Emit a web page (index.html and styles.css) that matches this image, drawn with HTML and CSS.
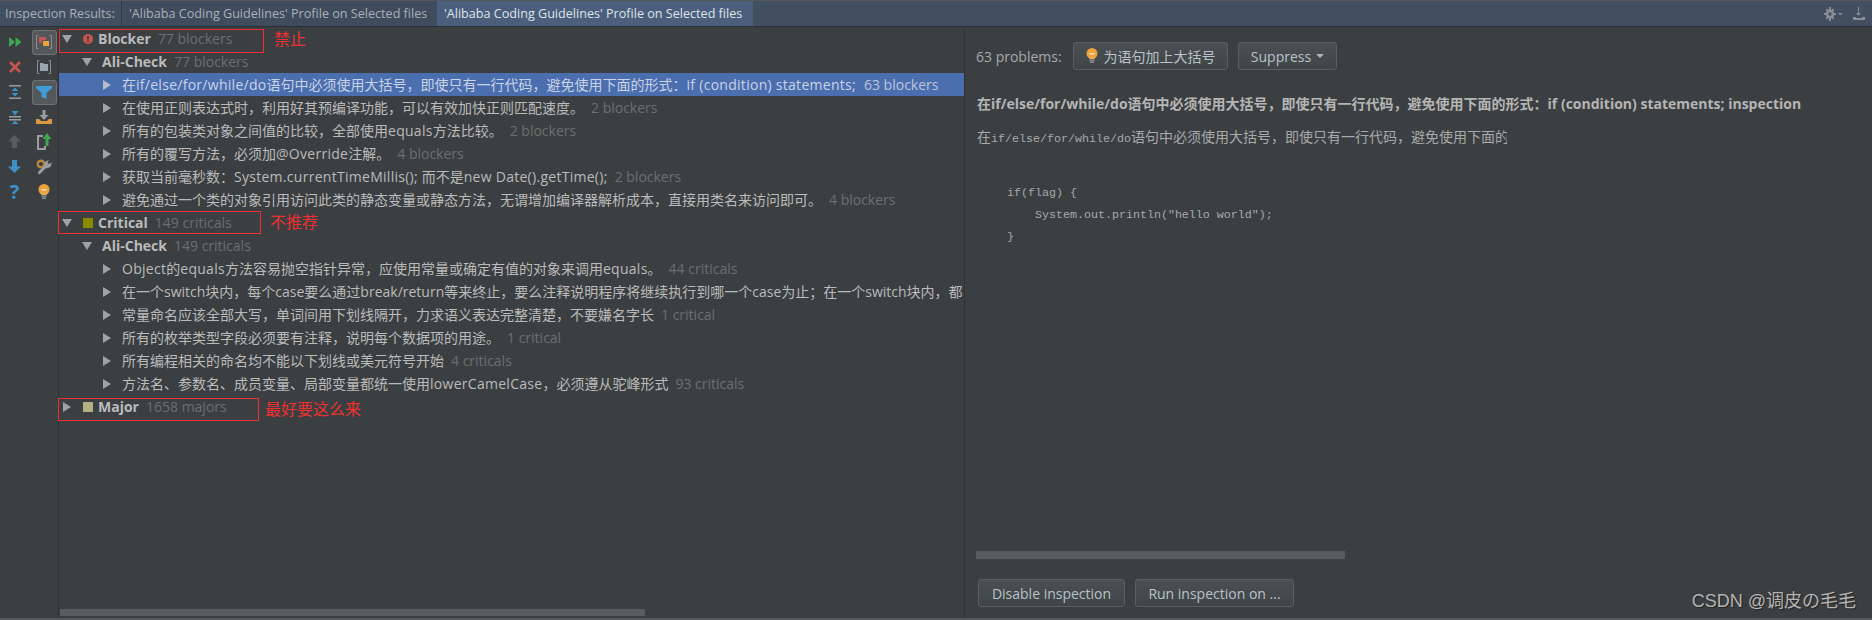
FILE: index.html
```html
<!DOCTYPE html>
<html lang="zh">
<head>
<meta charset="utf-8">
<title>Inspection Results</title>
<link rel="stylesheet" href="styles.css">
</head>
<body>
<div class="app">
  <header class="tabs">
    <div class="tab-label">Inspection Results:</div>
    <div class="tab">'Alibaba Coding Guidelines' Profile on Selected files</div>
    <div class="tab tab-active">'Alibaba Coding Guidelines' Profile on Selected files</div>
    <div class="tab-tools">
      <svg class="gear" width="19" height="14" viewBox="0 0 19 14"><g fill="#8a8e92"><circle cx="6" cy="7" r="4.300"/><path d="M5 0h2v3H5zM5 11h2v3H5zM0 6h3v2H0zM9 6h3v2H9zM1.600 3l1.400-1.400 2 2-1.400 1.400zM10.400 11l-1.400 1.400-2-2 1.400-1.400zM9 1.600L10.400 3l-2 2L7 3.600zM3 12.400L1.600 11l2-2L5 10.400z"/><path d="M14 6h4.500l-2.250 2.300z"/></g><circle cx="6" cy="7" r="1.700" fill="#43505f"/></svg>
      <svg width="12" height="14" viewBox="0 0 12 14"><g fill="#8a8e92"><path d="M5 0h1v6h2L5.500 8.500 3 6h2z"/><path d="M0 10h3v1h6v-1h3v3H0z"/></g></svg>
    </div>
  </header>
  <main class="main">
    <aside class="toolbar">
      <div class="tool"><svg width="14" height="14" viewBox="0 0 14 14"><path fill="#3fa552" d="M1 2l6 5-6 5zM7.500 2l6 5-6 5z"/></svg></div>
      <div class="tool tool-on"><svg width="18" height="18" viewBox="0 0 18 18"><g fill="none" stroke="#8c8f91"><path d="M3.500 2.500h-2v13h2M14.500 2.500h2v13h-2"/></g><path fill="#c75450" d="M4 4h7v6H4z"/><path fill="#eba33c" stroke="#55585a" d="M7.500 7.500h7v6h-7z"/></svg></div>
      <div class="tool"><svg width="14" height="14" viewBox="0 0 14 14"><path d="M2 2l10 10M12 2L2 12" stroke="#c75450" stroke-width="2.600" fill="none"/></svg></div>
      <div class="tool"><svg width="16" height="18" viewBox="0 0 16 18"><g fill="none" stroke="#8c8f91"><path d="M3.500 2.500h-2v13h2M12.500 2.500h2v13h-2"/></g><path fill="#9aa7b0" d="M4 5h3l1 1h4v7H4z"/></svg></div>
      <div class="tool"><svg width="14" height="16" viewBox="0 0 14 16"><path fill="#9a9da0" d="M1 1h12v1.500H1zM1 13.500h12V15H1z"/><path fill="#3d8fc4" d="M7 3.500l3.500 3.500h-7zM7 12.500L3.500 9h7z"/></svg></div>
      <div class="tool tool-on"><svg width="16" height="16" viewBox="0 0 16 16"><path fill="#3d9bd6" d="M0 2h16v2l-5.500 5v6l-5-2V9L0 4z"/></svg></div>
      <div class="tool"><svg width="14" height="16" viewBox="0 0 14 16"><path fill="#9a9da0" d="M1 7h12v1.500H1zM1 10h12v1.500H1z"/><path fill="#3d8fc4" d="M7 6.500L3.500 2h7zM7 11.500l3.500 3.500h-7z"/></svg></div>
      <div class="tool"><svg width="16" height="16" viewBox="0 0 16 16"><path fill="#d99a3e" d="M0 10h3l2 2h6l2-2h3v5H0z"/><path fill="#9a9da0" d="M6.500 1h3v5h3L8 11 3.500 6h3z"/></svg></div>
      <div class="tool"><svg width="13" height="13" viewBox="0 0 13 13"><path fill="#5a5d5f" d="M6.500 0L13 6.500H9V13H4V6.500H0z"/></svg></div>
      <div class="tool"><svg width="16" height="18" viewBox="0 0 16 18"><path fill="none" stroke="#9a9da0" stroke-width="2" d="M7 3H2v13h7v-3"/><path fill="#3fa552" d="M11 0l4.500 6h-3v7h-3V6h-3z"/></svg></div>
      <div class="tool"><svg width="13" height="13" viewBox="0 0 13 13"><path fill="#3d8fc4" d="M6.500 13L0 6.500h4V0h5v6.500h4z"/></svg></div>
      <div class="tool"><svg width="16" height="16" viewBox="0 0 16 16"><circle cx="5" cy="5" r="3.300" fill="none" stroke="#b7853d" stroke-width="2.400"/><path d="M2.500 14.500l6.500-6.500" stroke="#9a9da0" stroke-width="2.800" fill="none"/><path fill="#9a9da0" d="M8 7.500L9 3l4-2.500-1.500 3 1.500 1.500 3-1.500L14.500 8 10 9.500z"/></svg></div>
      <div class="tool tool-help">?</div>
      <div class="tool"><svg width="12" height="16" viewBox="0 0 12 16"><circle cx="6" cy="5.500" r="5.500" fill="#eba33c"/><path d="M3.500 5l1.200 1.500L6 5l1.300 1.500L8.500 5" fill="none" stroke="#fff" stroke-width=".8"/><path fill="#e0b060" d="M3.500 9h5v2h-5z"/><path fill="#8c8f91" d="M3.500 11.500h5V13h-5zM4 13.500h4V15H4z"/></svg></div>
    </aside>

    <section class="tree-pane">
      <div class="tree">
        <div class="row lv0"><i class="tri down"></i><svg class="sev" width="10" height="10" viewBox="0 0 10 10"><circle cx="5" cy="5" r="5" fill="#c75450"/><path fill="#3c3f41" d="M4.200 2h1.600v3.800H4.200zM4.200 6.500h1.600V8H4.200z"/></svg><b class="name">Blocker</b><span class="count">77 blockers</span></div>
        <div class="row lv1"><i class="tri down"></i><b class="name">Ali-Check</b><span class="count">77 blockers</span></div>
        <div class="row lv2 selected"><i class="tri right"></i><span class="text">在<span class="lat">if/else/for/while/do</span>语句中必须使用大括号，即使只有一行代码，避免使用下面的形式：<span class="lat">if (condition) statements;</span></span><span class="count">63 blockers</span></div>
        <div class="row lv2"><i class="tri right"></i><span class="text">在使用正则表达式时，利用好其预编译功能，可以有效加快正则匹配速度。</span><span class="count">2 blockers</span></div>
        <div class="row lv2"><i class="tri right"></i><span class="text">所有的包装类对象之间值的比较，全部使用<span class="lat">equals</span>方法比较。</span><span class="count">2 blockers</span></div>
        <div class="row lv2"><i class="tri right"></i><span class="text">所有的覆写方法，必须加<span class="lat">@Override</span>注解。</span><span class="count">4 blockers</span></div>
        <div class="row lv2"><i class="tri right"></i><span class="text">获取当前毫秒数：<span class="lat">System.currentTimeMillis();</span> 而不是<span class="lat">new Date().getTime();</span></span><span class="count">2 blockers</span></div>
        <div class="row lv2"><i class="tri right"></i><span class="text">避免通过一个类的对象引用访问此类的静态变量或静态方法，无谓增加编译器解析成本，直接用类名来访问即可。</span><span class="count">4 blockers</span></div>
        <div class="row lv0"><i class="tri down"></i><i class="sev sev-critical"></i><b class="name">Critical</b><span class="count">149 criticals</span></div>
        <div class="row lv1"><i class="tri down"></i><b class="name">Ali-Check</b><span class="count">149 criticals</span></div>
        <div class="row lv2"><i class="tri right"></i><span class="text"><span class="lat">Object</span>的<span class="lat">equals</span>方法容易抛空指针异常，应使用常量或确定有值的对象来调用<span class="lat">equals</span>。</span><span class="count">44 criticals</span></div>
        <div class="row lv2"><i class="tri right"></i><span class="text">在一个switch块内，每个case要么通过break/return等来终止，要么注释说明程序将继续执行到哪一个case为止；在一个switch块内，都</span></div>
        <div class="row lv2"><i class="tri right"></i><span class="text">常量命名应该全部大写，单词间用下划线隔开，力求语义表达完整清楚，不要嫌名字长</span><span class="count">1 critical</span></div>
        <div class="row lv2"><i class="tri right"></i><span class="text">所有的枚举类型字段必须要有注释，说明每个数据项的用途。</span><span class="count">1 critical</span></div>
        <div class="row lv2"><i class="tri right"></i><span class="text">所有编程相关的命名均不能以下划线或美元符号开始</span><span class="count">4 criticals</span></div>
        <div class="row lv2"><i class="tri right"></i><span class="text">方法名、参数名、成员变量、局部变量都统一使用<span class="lat">lowerCamelCase</span>，必须遵从驼峰形式</span><span class="count">93 criticals</span></div>
        <div class="row lv0"><i class="tri right"></i><i class="sev sev-major"></i><b class="name">Major</b><span class="count">1658 majors</span></div>
      </div>
      <div class="tree-scroll"><div class="tree-thumb"></div></div>
    </section>

    <section class="detail">
      <div class="actions">
        <span class="problems">63 problems:</span>
        <button class="btn btn-fix"><svg width="12" height="16" viewBox="0 0 12 16"><circle cx="6" cy="5.500" r="5.500" fill="#eba33c"/><path d="M3.500 5l1.200 1.500L6 5l1.300 1.500L8.500 5" fill="none" stroke="#fff" stroke-width=".8"/><path fill="#e0b060" d="M3.500 9h5v2h-5z"/><path fill="#8c8f91" d="M3.500 11.500h5V13h-5zM4 13.500h4V15H4z"/></svg>为语句加上大括号</button>
        <button class="btn btn-suppress">Suppress<i class="caret"></i></button>
      </div>
      <h2 class="title">在if/else/for/while/do语句中必须使用大括号，即使只有一行代码，避免使用下面的形式：if (condition) statements; inspection</h2>
      <p class="desc">在<span class="mono">if/else/for/while/do</span>语句中必须使用大括号，即使只有一行代码，避免使用下面的</p>
      <pre class="code">if(flag) {
    System.out.println("hello world");
}</pre>
      <div class="spacer"></div>
      <div class="detail-scroll"></div>
      <div class="footer-btns">
        <button class="btn btn-disable">Disable inspection</button>
        <button class="btn btn-run">Run inspection on ...</button>
      </div>
    </section>
  </main>

  <div class="note-box box-blocker"></div><span class="note note-blocker">禁止</span>
  <div class="note-box box-critical"></div><span class="note note-critical">不推荐</span>
  <div class="note-box box-major"></div><span class="note note-major">最好要这么来</span>
  <div class="watermark">CSDN @调皮の毛毛</div>
</div>
</body>
</html>
```
FILE: styles.css
```css
* { box-sizing: border-box; }
html, body { margin: 0; padding: 0; }
body {
  background: #3c3f41;
  color: #bbbbbb;
  font: 14px "Open Sans", "Noto Sans CJK SC", sans-serif;
}
.app {
  position: relative;
  width: 1872px;
  height: 620px;
  display: flex;
  flex-direction: column;
  border-top: 1px solid #555759;
  border-bottom: 2px solid #555759;
  overflow: hidden;
}

/* tab bar */
.tabs {
  height: 26px;
  flex: none;
  display: flex;
  align-items: stretch;
  background: #414f61;
  border-bottom: 1px solid #2b2f33;
  font-size: 12.6px;
  color: #a9b0b8;
}
.tab-label {
  width: 122px;
  flex: none;
  padding-left: 5px;
  line-height: 25px;
  border-right: 1px solid #333b45;
}
.tab {
  width: 315px;
  flex: none;
  padding-left: 7px;
  line-height: 25px;
  white-space: nowrap;
  background: #3f4c5d;
}
.tab-active {
  width: 316px;
  background: #4b5f7d;
  color: #dfe3e8;
}
.tab-tools {
  margin-left: auto;
  display: flex;
  align-items: center;
  gap: 10px;
  padding-right: 7px;
}

/* main area */
.main { flex: 1; display: flex; min-height: 0; }

.toolbar {
  width: 59px;
  flex: none;
  display: grid;
  grid-template-columns: 29px 29px;
  grid-auto-rows: 25px;
  align-content: start;
  padding-top: 2px;
  border-right: 1px solid #323232;
}
.tool {
  display: flex;
  align-items: center;
  justify-content: center;
  position: relative;
}
.tool-on::before {
  content: "";
  position: absolute;
  left: 3px;
  top: 1px;
  width: 23px;
  height: 23px;
  background: #55585a;
  border: 1px solid #6f7274;
  border-radius: 3px;
}
.tool-on svg { position: relative; }
.tool-help {
  color: #3d8fc4;
  font: bold 20px "Open Sans", sans-serif;
}

/* tree */
.tree-pane {
  width: 906px;
  flex: none;
  display: flex;
  flex-direction: column;
  border-right: 1px solid #323232;
}
.tree { flex: 1; min-height: 0; }
.row {
  height: 23px;
  line-height: 23px;
  display: flex;
  align-items: center;
  white-space: nowrap;
  overflow: hidden;
  color: #bbbbbb;
}
.lv0 { padding-left: 3px; }
.lv1 { padding-left: 23px; }
.lv2 { padding-left: 43px; }
.selected { background: #4b6eaf; }
.tri {
  flex: none;
  width: 0;
  height: 0;
  border-style: solid;
  border-color: transparent;
}
.tri.down {
  border-width: 8px 5px 0;
  border-top-color: #a0a3a5;
  margin-right: 10px;
}
.tri.right {
  border-width: 5px 0 5px 8px;
  border-left-color: #a0a3a5;
  margin-left: 1px;
  margin-right: 11px;
}
.selected .tri.right { border-left-color: #b6bdca; }
.lv0 .tri { margin-right: 11px; }
.lv0 .tri.right { margin-right: 12px; }
.sev { flex: none; width: 10px; height: 10px; margin-right: 5px; display: block; }
.sev-critical { background: #8b8b00; }
.sev-major { background: #b1b182; }
.name { font-weight: 700; color: #bbbbbb; }
.count { color: #6e6e6e; margin-left: 7px; }
.text { flex: none; }
.lat { letter-spacing: .28px; }
.selected .text { color: #c9d3e5; }
.selected .count { color: #bcc6da; margin-left: 8px; }

.tree-scroll { height: 9px; flex: none; padding: 0 0 2px 1px; }
.tree-thumb { width: 585px; height: 7px; background: #595b5d; }

/* detail */
.detail {
  flex: 1;
  display: flex;
  flex-direction: column;
  padding: 15px 0 11px 11px;
  min-width: 0;
}
.actions { display: flex; align-items: center; height: 28px; }
.problems { width: 97px; flex: none; color: #a9a9a9; }
.btn {
  height: 28px;
  padding: 0;
  display: inline-flex;
  align-items: center;
  justify-content: center;
  font: 14px "Open Sans", "Noto Sans CJK SC", sans-serif;
  color: #b9c2ca;
  background: linear-gradient(#4a4f52, #404548);
  border: 1px solid #5a5e60;
  border-radius: 3px;
}
.btn svg { margin-right: 6px; }
.btn-fix { width: 155px; }
.btn-suppress { width: 99px; margin-left: 10px; }
.caret {
  width: 0; height: 0;
  margin-left: 5px;
  border-style: solid;
  border-width: 4px 4px 0;
  border-color: #b0b3b5 transparent transparent;
}
.title {
  margin: 24px 0 0 1px;
  font-size: 14px;
  line-height: 20px;
  font-weight: 700;
  white-space: nowrap;
  color: #b5b5b5;
}
.desc {
  margin: 13px 0 0 1px;
  width: 530px;
  overflow: hidden;
  white-space: nowrap;
  line-height: 20px;
  color: #a9a9a9;
}
.mono, .code { font-family: "Liberation Mono", monospace; font-size: 11.67px; }
.code {
  margin: 33px 0 0 31px;
  line-height: 22px;
  color: #a9a9a9;
}
.spacer { flex: 1; }
.detail-scroll { width: 369px; height: 8px; background: #595b5d; flex: none; }
.footer-btns { display: flex; gap: 10px; margin: 20px 0 0 2px; }
.btn-disable { width: 147px; }
.btn-run { width: 159px; }

/* overlays: annotations drawn on top of the screenshot */
.note-box { position: absolute; border: 1px solid #ee3030; pointer-events: none; }
.box-blocker { left: 59px; top: 28px; width: 205px; height: 24px; }
.box-critical { left: 58px; top: 210px; width: 203px; height: 23px; }
.box-major { left: 58px; top: 397px; width: 201px; height: 23px; }
.note { position: absolute; color: #f03030; font-size: 16px; line-height: 20px; white-space: nowrap; }
.note-blocker { left: 274px; top: 28px; }
.note-critical { left: 270px; top: 211px; }
.note-major { left: 265px; top: 398px; }
.watermark {
  position: absolute;
  right: 16px;
  bottom: 6px;
  font: 18px "Liberation Sans", "Noto Sans CJK SC", sans-serif;
  color: #b5b5b5;
  text-shadow: 1px 1px 1px #222;
}
```
